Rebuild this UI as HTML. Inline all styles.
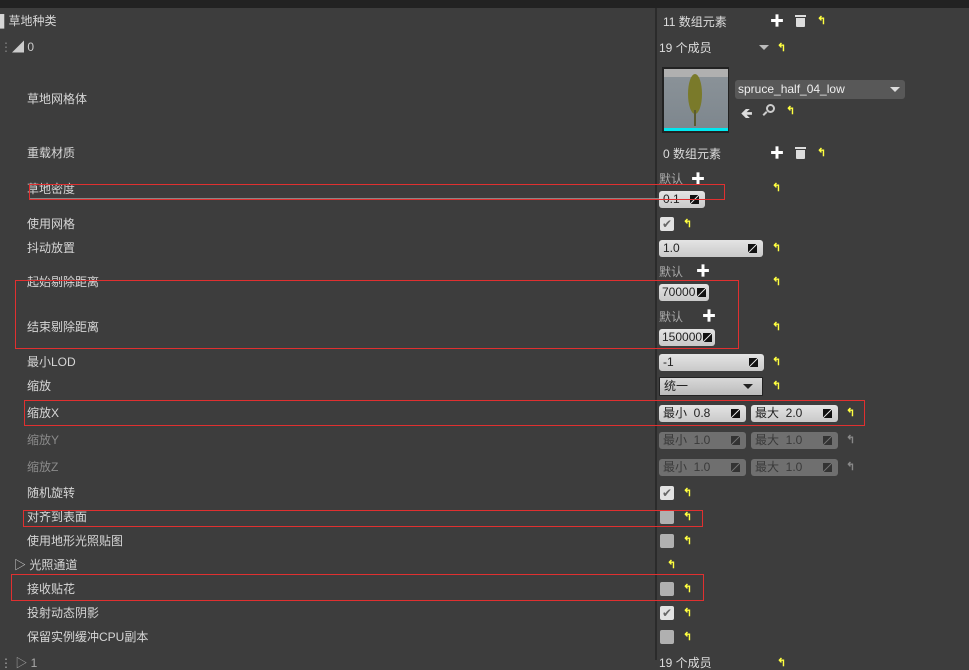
<!DOCTYPE html>
<html><head><meta charset="utf-8"><style>
body{margin:0;width:969px;height:660px;background:#3d3d3d;overflow:hidden;position:relative;font-family:"Liberation Sans","Noto Sans CJK SC",sans-serif;font-size:12px;color:#d6d6d6}
div,span{position:absolute;box-sizing:border-box}
.top{left:0;top:0;width:969px;height:8px;background:#222}
.vl{left:655px;top:8px;width:2px;height:652px;background:#2b2b2b}
.l{left:27px;line-height:14px;white-space:nowrap}
.r{color:#ddd;line-height:14px;white-space:nowrap}
.box{height:17px;border-radius:3px;background:linear-gradient(#e4e4e4,#c9c9c9);color:#222;font-size:12px;line-height:17px;padding-left:4px;white-space:nowrap}
.dis{background:#6f6f6f;color:#3a3a3a}
.arr{width:9px;height:9px;top:4px;right:6px;background:linear-gradient(135deg,#111 45%,transparent 45%,transparent 55%,#111 55%)}
.dis .arr{background:linear-gradient(135deg,#333 45%,transparent 45%,transparent 55%,#333 55%)}
.y{color:#ffff40;font-size:11px;font-weight:bold;line-height:12px}
.g{color:#999}
.cb{width:14px;height:14px;border-radius:2px;background:#b0b0b0}
.ck{background:#e2e2e2;color:#666;font-size:12px;line-height:14px;text-align:center}
.red{border:1px solid #e03030}
.plus{color:#fff;font-size:14px;font-weight:bold;line-height:14px}
.trash{width:11px;height:12px;border-top:2px solid #ddd}
.trash:after{content:"";position:absolute;left:1px;top:1px;width:9px;height:9px;background:#ddd;border-radius:0 0 1px 1px}
</style></head><body>
<div class="top"></div>
<div class="vl"></div>

<div class="l" style="left:0;top:14px">▌草地种类</div>
<div class="l" style="left:0;top:40px;color:#888">⋮<span style="position:static;color:#ccc">◢ 0</span></div>
<div class="l" style="top:92px">草地网格体</div>
<div class="l" style="top:146px">重载材质</div>
<div class="l" style="top:182px">草地密度</div>
<div class="l" style="top:217px">使用网格</div>
<div class="l" style="top:241px">抖动放置</div>
<div class="l" style="top:275px">起始剔除距离</div>
<div class="l" style="top:320px">结束剔除距离</div>
<div class="l" style="top:355px">最小LOD</div>
<div class="l" style="top:379px">缩放</div>
<div class="l" style="top:406px">缩放X</div>
<div class="l g" style="top:433px;color:#8a8a8a">缩放Y</div>
<div class="l g" style="top:460px;color:#8a8a8a">缩放Z</div>
<div class="l" style="top:486px">随机旋转</div>
<div class="l" style="top:510px">对齐到表面</div>
<div class="l" style="top:534px">使用地形光照贴图</div>
<div class="l" style="left:14px;top:558px">▷ 光照通道</div>
<div class="l" style="top:582px">接收贴花</div>
<div class="l" style="top:606px">投射动态阴影</div>
<div class="l" style="top:630px">保留实例缓冲CPU副本</div>
<div class="l" style="left:0;top:656px;color:#aaa">⋮ ▷ 1</div>

<!-- right -->
<div class="r" style="left:663px;top:15px">11 数组元素</div>
<div class="plus" style="left:770px;top:14px">✚</div>
<div class="trash" style="left:795px;top:15px"></div>
<div class="y" style="left:817px;top:15px">↰</div>
<div class="r" style="left:659px;top:41px">19 个成员</div>
<div style="left:759px;top:45px;width:0;height:0;border-left:5px solid transparent;border-right:5px solid transparent;border-top:5px solid #bbb"></div>
<div class="y" style="left:777px;top:42px">↰</div>

<div style="left:662px;top:67px;width:67px;height:66px;background:#222"></div>
<div style="left:664px;top:69px;width:64px;height:62px;background:linear-gradient(#b0b0b0 0,#b0b0b0 8px,#8a9298 8px,#7d868d 100%)"></div>
<div style="left:664px;top:128px;width:64px;height:3px;background:#00e8f0"></div>
<div style="left:688px;top:74px;width:14px;height:40px;border-radius:50%;background:#7a7a2a"></div>
<div style="left:694px;top:110px;width:2px;height:16px;background:#5a5a30"></div>

<div style="left:735px;top:80px;width:170px;height:19px;background:#585858;border-radius:3px;color:#eee;line-height:18px;padding-left:3px">spruce_half_04_low<span style="right:5px;top:7px;border-left:5px solid transparent;border-right:5px solid transparent;border-top:5px solid #ddd"></span></div>
<div style="left:741px;top:103px;color:#ddd;font-size:14px;font-weight:bold">🡸</div>
<div style="left:766px;top:104px;width:9px;height:9px;border:2px solid #ccc;border-radius:50%"></div>
<div style="left:764px;top:111px;width:2px;height:5px;background:#ccc;transform:rotate(45deg)"></div>
<div class="y" style="left:786px;top:105px">↰</div>

<div class="r" style="left:663px;top:147px">0 数组元素</div>
<div class="plus" style="left:770px;top:146px">✚</div>
<div class="trash" style="left:795px;top:147px"></div>
<div class="y" style="left:817px;top:147px">↰</div>

<div class="r g" style="left:659px;top:172px;color:#aaa">默认</div>
<div class="plus" style="left:691px;top:172px">✚</div>
<div class="y" style="left:772px;top:182px">↰</div>
<div class="box" style="left:659px;top:191px;width:46px">0.1<span class="arr"></span></div>

<div class="cb ck" style="left:660px;top:217px">✔</div>
<div class="y" style="left:683px;top:218px">↰</div>
<div class="box" style="left:659px;top:240px;width:104px">1.0<span class="arr"></span></div>
<div class="y" style="left:772px;top:242px">↰</div>

<div class="r g" style="left:659px;top:265px;color:#aaa">默认</div>
<div class="plus" style="left:696px;top:264px">✚</div>
<div class="y" style="left:772px;top:276px">↰</div>
<div class="box" style="left:659px;top:284px;width:50px;padding-left:3px">70000<span class="arr" style="right:3px"></span></div>
<div class="r g" style="left:659px;top:310px;color:#aaa">默认</div>
<div class="plus" style="left:702px;top:309px">✚</div>
<div class="y" style="left:772px;top:321px">↰</div>
<div class="box" style="left:659px;top:329px;width:56px;padding-left:3px">150000<span class="arr" style="right:3px"></span></div>

<div class="box" style="left:659px;top:354px;width:105px">-1<span class="arr"></span></div>
<div class="y" style="left:772px;top:356px">↰</div>
<div class="box" style="left:659px;top:377px;width:104px;height:19px;border-radius:1px;border:1px solid #222;background:linear-gradient(#d8d8d8,#bbb)">统一<span style="right:9px;top:6px;border-left:5px solid transparent;border-right:5px solid transparent;border-top:5px solid #222"></span></div>
<div class="y" style="left:772px;top:380px">↰</div>

<div class="box" style="left:659px;top:405px;width:87px">最小&nbsp; 0.8<span class="arr"></span></div>
<div class="box" style="left:751px;top:405px;width:87px">最大&nbsp; 2.0<span class="arr"></span></div>
<div class="y" style="left:846px;top:407px">↰</div>
<div class="box dis" style="left:659px;top:432px;width:87px">最小&nbsp; 1.0<span class="arr"></span></div>
<div class="box dis" style="left:751px;top:432px;width:87px">最大&nbsp; 1.0<span class="arr"></span></div>
<div class="y g" style="left:846px;top:434px;color:#888">↰</div>
<div class="box dis" style="left:659px;top:459px;width:87px">最小&nbsp; 1.0<span class="arr"></span></div>
<div class="box dis" style="left:751px;top:459px;width:87px">最大&nbsp; 1.0<span class="arr"></span></div>
<div class="y g" style="left:846px;top:461px;color:#888">↰</div>

<div class="cb ck" style="left:660px;top:486px">✔</div><div class="y" style="left:683px;top:487px">↰</div>
<div class="cb" style="left:660px;top:510px"></div><div class="y" style="left:683px;top:511px">↰</div>
<div class="cb" style="left:660px;top:534px"></div><div class="y" style="left:683px;top:535px">↰</div>
<div class="y" style="left:667px;top:559px">↰</div>
<div class="cb" style="left:660px;top:582px"></div><div class="y" style="left:683px;top:583px">↰</div>
<div class="cb ck" style="left:660px;top:606px">✔</div><div class="y" style="left:683px;top:607px">↰</div>
<div class="cb" style="left:660px;top:630px"></div><div class="y" style="left:683px;top:631px">↰</div>
<div class="r" style="left:659px;top:656px">19 个成员</div>
<div class="y" style="left:777px;top:657px">↰</div>

<!-- red annotation boxes -->
<div style="left:29px;top:198px;width:630px;height:1px;background:#888"></div>
<div class="red" style="left:29px;top:184px;width:696px;height:16px"></div>
<div class="red" style="left:15px;top:280px;width:724px;height:69px"></div>
<div class="red" style="left:24px;top:400px;width:841px;height:26px"></div>
<div class="red" style="left:23px;top:510px;width:680px;height:17px"></div>
<div class="red" style="left:11px;top:574px;width:693px;height:27px"></div>
</body></html>
